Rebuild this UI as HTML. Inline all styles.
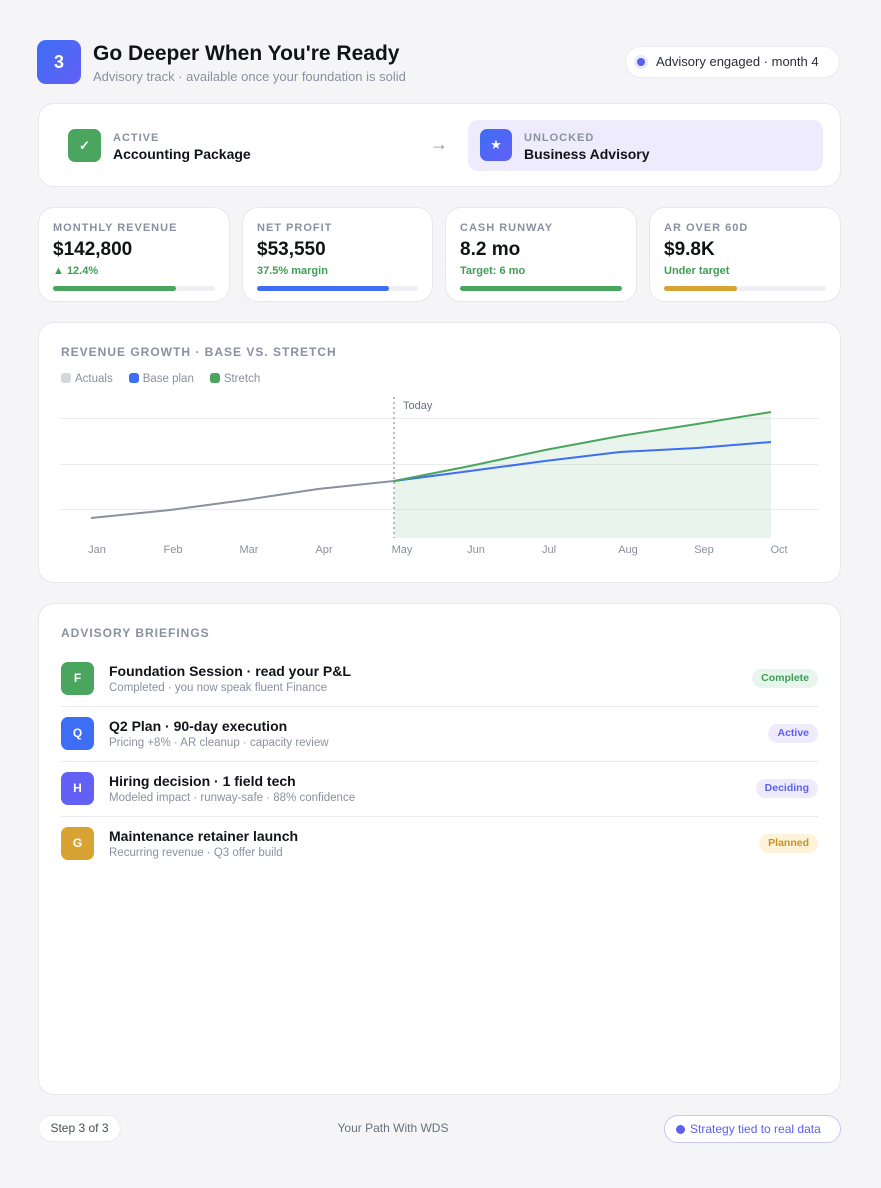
<!DOCTYPE html>
<html><head><meta charset="utf-8"><style>
*{box-sizing:border-box;margin:0;padding:0}
body{width:881px;height:1188px;background:#f5f5f7;font-family:"Liberation Sans",sans-serif;color:#111318;position:relative;overflow:hidden}
.abs{position:absolute}
.card{position:absolute;background:#fff;border:1px solid #e8e8ec;border-radius:16px}
.lbl{font-size:11px;font-weight:700;letter-spacing:1px;color:#8b90a0}
.stat .lbl{position:absolute;left:14px;top:14px}
.stat .v{position:absolute;left:14px;top:31px;font-size:19px;font-weight:700}
.stat .s{position:absolute;left:14px;top:57px;font-size:11px;font-weight:700}
.stat .bar{position:absolute;left:14px;right:14px;top:78px;height:5px;border-radius:3px;background:#eef0f3}
.stat .bar i{display:block;height:5px;border-radius:3px}
.row{position:absolute;left:22px;right:22px;height:55px;border-bottom:1px solid #ebebee}
.row .ic{position:absolute;left:0;top:10px;width:33px;height:33px;border-radius:7px;color:#fff;font-weight:700;font-size:12px;text-align:center;line-height:33px}
.row .t{position:absolute;left:48px;top:11px;font-size:14px;font-weight:700}
.row .d{position:absolute;left:48px;top:30px;font-size:11.5px;color:#8b90a0}
.row .b{position:absolute;right:0;top:17px;height:19px;line-height:19px;padding:0 9px;border-radius:10px;font-size:10.5px;font-weight:700}
.lg{display:inline-block;width:10px;height:10px;border-radius:3px;vertical-align:-1px;margin-right:4px}
</style></head><body>
<div class="abs" style="left:37px;top:40px;width:44px;height:44px;border-radius:9px;background:linear-gradient(135deg,#3d6ef5,#6260f5);color:#fff;font-weight:700;font-size:18px;text-align:center;line-height:44px">3</div>
<div class="abs" style="left:93px;top:42px;font-size:21px;font-weight:700">Go Deeper When You're Ready</div>
<div class="abs" style="left:93px;top:69px;font-size:13px;color:#8b90a0">Advisory track · available once your foundation is solid</div>
<div class="abs" style="left:625px;top:46px;width:215px;height:32px;border-radius:16px;background:#fff;border:1px solid #ebebef;font-size:13px;color:#2a2d36;line-height:30px;padding-left:30px">Advisory engaged · month 4
<span class="abs" style="left:8px;top:8px;width:14px;height:14px;border-radius:7px;background:#ebe9fd"></span><span class="abs" style="left:11px;top:11px;width:8px;height:8px;border-radius:4px;background:#5b60f0"></span></div>

<div class="card" style="left:38px;top:103px;width:803px;height:84px">
<div class="abs" style="left:29px;top:25px;width:33px;height:33px;border-radius:7px;background:#4aa55f;color:#fff;text-align:center;line-height:33px;font-size:13px;font-weight:700">✓</div>
<div class="abs lbl" style="left:74px;top:28px">ACTIVE</div>
<div class="abs" style="left:74px;top:42px;font-size:14px;font-weight:700">Accounting Package</div>
<div class="abs" style="left:391px;top:30px;font-size:18px;color:#8b90a0">→</div>
<div class="abs" style="left:429px;top:16px;width:355px;height:51px;border-radius:10px;background:#eeebfd">
<div class="abs" style="left:12px;top:9px;width:32px;height:32px;border-radius:7px;background:linear-gradient(135deg,#3d6ef5,#6260f5);color:#fff;text-align:center;line-height:32px;font-size:13px">★</div>
<div class="abs lbl" style="left:56px;top:12px">UNLOCKED</div>
<div class="abs" style="left:56px;top:26px;font-size:14px;font-weight:700">Business Advisory</div>
</div></div>

<div class="card stat" style="left:38px;top:207px;width:192px;height:95px"><div class="lbl">MONTHLY REVENUE</div><div class="v">$142,800</div><div class="s" style="color:#3f9d58">▲ 12.4%</div><div class="bar"><i style="width:76%;background:#4aa55f"></i></div></div>
<div class="card stat" style="left:242px;top:207px;width:191px;height:95px"><div class="lbl">NET PROFIT</div><div class="v">$53,550</div><div class="s" style="color:#3f9d58">37.5% margin</div><div class="bar"><i style="width:82%;background:#3d6ef5"></i></div></div>
<div class="card stat" style="left:445px;top:207px;width:192px;height:95px"><div class="lbl">CASH RUNWAY</div><div class="v">8.2 mo</div><div class="s" style="color:#3f9d58">Target: 6 mo</div><div class="bar"><i style="width:100%;background:#4aa55f"></i></div></div>
<div class="card stat" style="left:649px;top:207px;width:192px;height:95px"><div class="lbl">AR OVER 60D</div><div class="v">$9.8K</div><div class="s" style="color:#3f9d58">Under target</div><div class="bar"><i style="width:45%;background:#d9a334"></i></div></div>

<div class="card" style="left:38px;top:322px;width:803px;height:261px">
<div class="abs lbl" style="left:22px;top:22px;font-size:12px">REVENUE GROWTH · BASE VS. STRETCH</div>
<div class="abs" style="left:22px;top:50px;font-size:11.5px;color:#8b90a0">
<span class="lg" style="background:#d6d7dc"></span>Actuals&nbsp;&nbsp;&nbsp;&nbsp;
<span class="lg" style="background:#3d6ef5"></span>Base plan&nbsp;&nbsp;&nbsp;&nbsp;
<span class="lg" style="background:#4aa55f"></span>Stretch</div>
</div>
<svg class="abs" style="left:0;top:0" width="881" height="600">
<g stroke="#ececef" stroke-width="1"><line x1="60" y1="418.5" x2="818" y2="418.5"/><line x1="60" y1="464.5" x2="818" y2="464.5"/><line x1="60" y1="509.5" x2="818" y2="509.5"/></g>
<path d="M394 481 L470 466 L545 450 L620 436 L697 424 L771 412 L771 538 L394 538Z" fill="#4aa55f" fill-opacity="0.12"/>
<line x1="394" y1="397" x2="394" y2="538" stroke="#8b90a0" stroke-dasharray="2,3" stroke-width="1.2"/>
<text x="403" y="409" font-family="Liberation Sans" font-size="11" fill="#6b7080">Today</text>
<polyline points="91,518 170,510 245,500 318,489 394,481" fill="none" stroke="#8b90a0" stroke-width="2"/>
<polyline points="394,481 470,471 545,461 620,452 697,448 771,442" fill="none" stroke="#3d6ef5" stroke-width="2"/>
<polyline points="394,481 470,466 545,450 620,436 697,424 771,412" fill="none" stroke="#4aa55f" stroke-width="2"/>
<g font-family="Liberation Sans" font-size="11" fill="#8b90a0" text-anchor="middle">
<text x="97" y="553">Jan</text><text x="173" y="553">Feb</text><text x="249" y="553">Mar</text><text x="324" y="553">Apr</text><text x="402" y="553">May</text><text x="476" y="553">Jun</text><text x="549" y="553">Jul</text><text x="628" y="553">Aug</text><text x="704" y="553">Sep</text><text x="779" y="553">Oct</text></g>
</svg>

<div class="card" style="left:38px;top:603px;width:803px;height:492px">
<div class="abs lbl" style="left:22px;top:22px;font-size:12px">ADVISORY BRIEFINGS</div>
<div class="row" style="top:48px"><div class="ic" style="background:#4aa55f">F</div><div class="t">Foundation Session · read your P&amp;L</div><div class="d">Completed · you now speak fluent Finance</div><div class="b" style="background:#e8f5ec;color:#3f9d58">Complete</div></div>
<div class="row" style="top:103px"><div class="ic" style="background:#3d6ef5">Q</div><div class="t">Q2 Plan · 90-day execution</div><div class="d">Pricing +8% · AR cleanup · capacity review</div><div class="b" style="background:#eeebfd;color:#5b60f0">Active</div></div>
<div class="row" style="top:158px"><div class="ic" style="background:#6260f5">H</div><div class="t">Hiring decision · 1 field tech</div><div class="d">Modeled impact · runway-safe · 88% confidence</div><div class="b" style="background:#eeebfd;color:#5b60f0">Deciding</div></div>
<div class="row" style="top:213px;border-bottom:none"><div class="ic" style="background:#d9a334">G</div><div class="t">Maintenance retainer launch</div><div class="d">Recurring revenue · Q3 offer build</div><div class="b" style="background:#fcf3d9;color:#c99320">Planned</div></div>
</div>

<div class="abs" style="left:38px;top:1115px;width:83px;height:27px;border-radius:14px;background:#fff;border:1px solid #ebebef;font-size:12px;color:#4a4e5a;text-align:center;line-height:25px">Step 3 of 3</div>
<div class="abs" style="left:300px;width:186px;top:1121px;font-size:12px;color:#6b7080;text-align:center">Your Path With WDS</div>
<div class="abs" style="left:664px;top:1115px;width:177px;height:28px;border-radius:14px;background:#fff;border:1px solid #c9c6f8;font-size:12px;color:#5b60f0;line-height:26px;padding-left:25px">Strategy tied to real data<span class="abs" style="left:11px;top:9px;width:9px;height:9px;border-radius:5px;background:#5b60f0"></span></div>
</body></html>
